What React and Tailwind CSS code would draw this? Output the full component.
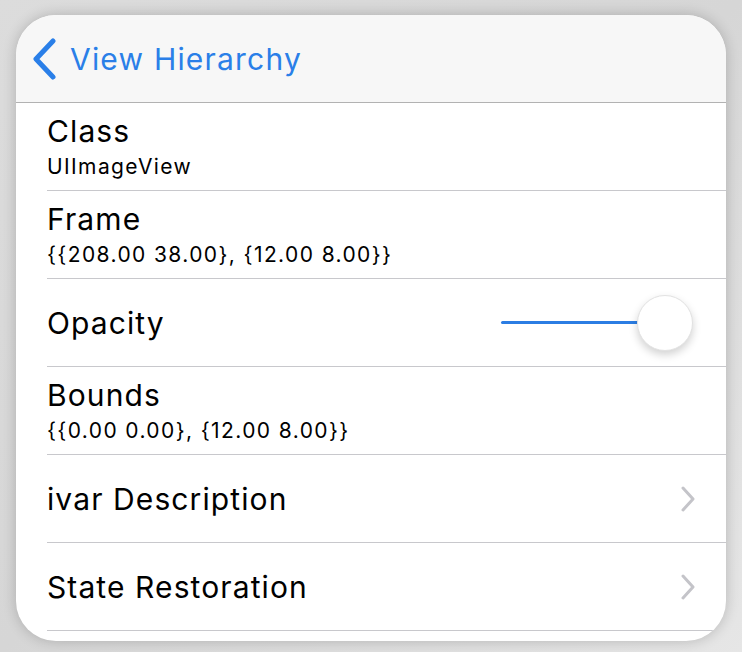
import React from 'react';

const font = { fontFamily: 'Inter, "Liberation Sans", sans-serif' };

const Chevron = () => (
  <svg width="16" height="26" viewBox="0 0 16 26" className="shrink-0">
    <path d="M3 2 L13 13 L3 24" fill="none" stroke="#c4c4c9" strokeWidth="3" strokeLinecap="round" strokeLinejoin="round" />
  </svg>
);

const Row = ({ title, sub, right }) => (
  <div className="h-[88px] pl-[31px] flex">
    <div className="flex-1 flex items-center border-b border-[#c8c8cc] pr-[30px]">
      <div className="flex-1 flex flex-col justify-center">
        <div className="text-[30px] leading-[34px] text-black tracking-[1.1px]">{title}</div>
        {sub && <div className="mt-[7px] text-[21px] leading-[24px] text-black tracking-[1.4px]">{sub}</div>}
      </div>
      {right}
    </div>
  </div>
);

const Slider = () => (
  <div className="flex items-center mr-[3px]">
    <div className="w-[140px] h-[3px] bg-[#2b7de3] rounded-full -mr-[4px]" />
    <div className="w-[56px] h-[56px] rounded-full bg-white border border-[#e2e2e2] shadow-[0_4px_8px_rgba(0,0,0,0.18)]" />
  </div>
);

export default function App() {
  return (
    <div className="w-[742px] h-[652px] bg-gradient-to-br from-[#dcdcdc] via-[#d6d6d6] to-[#e6e6e6] pt-[15px] px-[16px] pb-[11px]" style={font}>
      <div className="w-[710px] h-[626px] bg-white rounded-[40px] overflow-hidden shadow-[0_0_14px_rgba(0,0,0,0.2)]">
        <div className="h-[88px] bg-[#f7f7f7] border-b border-[#b2b2b2] flex items-center pl-[16px]">
          <svg width="26" height="42" viewBox="0 0 26 42" className="shrink-0">
            <path d="M21 3 L4 21 L21 39" fill="none" stroke="#2a7fe8" strokeWidth="5" strokeLinecap="round" strokeLinejoin="round" />
          </svg>
          <span className="ml-[12px] text-[30px] text-[#2a7fe8] tracking-[1.2px] leading-none">View Hierarchy</span>
        </div>
        <Row title="Class" sub="UIImageView" />
        <Row title="Frame" sub="{{208.00 38.00}, {12.00 8.00}}" />
        <Row title="Opacity" right={<Slider />} />
        <Row title="Bounds" sub="{{0.00 0.00}, {12.00 8.00}}" />
        <Row title="ivar Description" right={<Chevron />} />
        <Row title="State Restoration" right={<Chevron />} />
      </div>
    </div>
  );
}
